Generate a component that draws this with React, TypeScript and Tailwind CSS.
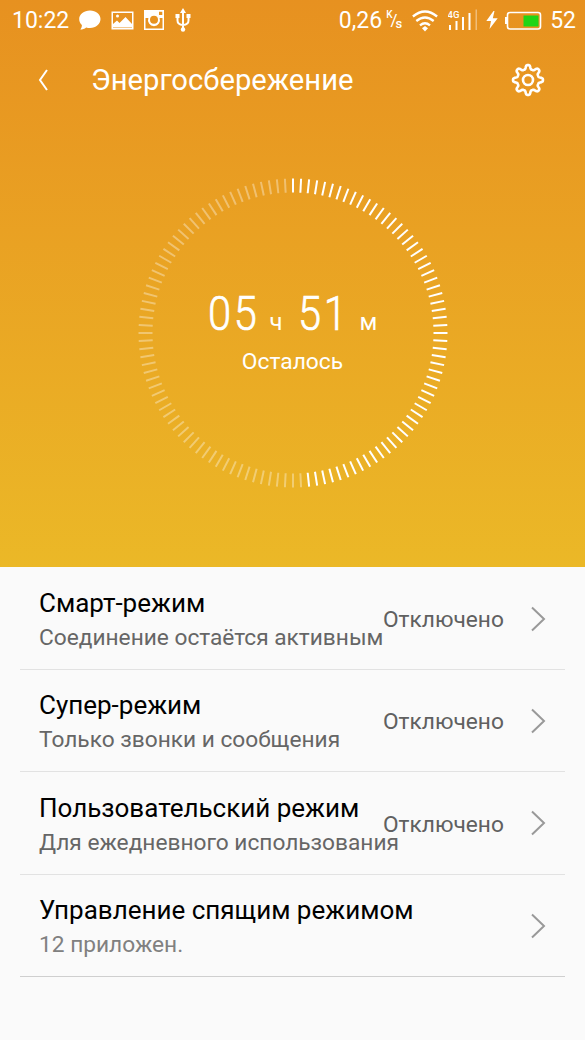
import type { ReactNode } from "react";

const modes = [
  { title: "Смарт-режим", hint: "Соединение остаётся активным", status: "Отключено", line: "border-[#e2e2e2]", hintColor: "text-[#666]" },
  { title: "Супер-режим", hint: "Только звонки и сообщения", status: "Отключено", line: "border-[#e2e2e2]", hintColor: "text-[#666]" },
  { title: "Пользовательский режим", hint: "Для ежедневного использования", status: "Отключено", line: "border-[#e2e2e2]", hintColor: "text-[#666]" },
  { title: "Управление спящим режимом", hint: "12 приложен.", status: "", line: "border-[#cfcfcf]", hintColor: "text-[#808080]" },
];

const TICKS = 120;
const ACTIVE_TICKS = 59;

// Eight rounded teeth, sampled in polar coordinates
const gearPath = (() => {
  const points: string[] = [];
  for (let i = 0; i < 160; i++) {
    const angle = (i / 160) * Math.PI * 2;
    const wave = Math.tanh(2 * Math.cos(angle * 8) - 0.3);
    const r = 13 + 2.1 * wave;
    points.push(`${(17 + r * Math.sin(angle)).toFixed(2)} ${(17 - r * Math.cos(angle)).toFixed(2)}`);
  }
  return `M${points.join("L")}Z`;
})();

const StatusBar = () => {
  return (
    <div className="flex h-10 items-center justify-between pl-3 pr-[9px] text-[23px] leading-none">
      <div className="flex items-center">
        <span className="w-[57px] whitespace-nowrap">10:22</span>
        <svg className="ml-[10px]" width="22" height="20" viewBox="0 0 22 20" fill="white">
          <path d="M11 0.5C17 0.5 21.5 4.2 21.5 9S17 18 11 18C9.6 18 8.3 17.8 7.2 17.4C5.5 18.8 3.5 19.6 1.3 19.6C2.4 18.3 2.9 16.8 2.9 15C1.1 13.4 0.2 11.3 0.2 9C0.2 4.2 5 0.5 11 0.5Z" />
        </svg>
        <svg className="ml-[10px]" width="23" height="20" viewBox="0 0 23 20">
          <rect x="1.25" y="2.25" width="20.5" height="16.5" fill="none" stroke="white" strokeWidth="1.5" />
          <path d="M2 17.5V14L6 10.5L8.5 13L14.5 7L21 14V17.5Z" fill="white" />
          <circle cx="6.5" cy="6" r="1.5" fill="white" />
        </svg>
        <svg className="ml-[10px]" width="20" height="20" viewBox="0 0 20 20">
          <path fill="white" fillRule="evenodd" d="M0 0H20V20H0ZM1.5 8V18.5H18.5V8H15.6A6 6 0 1 1 4.4 8ZM15 1.8V5H18.3V1.8ZM10 5.8A4 4 0 1 0 10 13.8A4 4 0 1 0 10 5.8Z" />
        </svg>
        <svg className="ml-[11px]" width="16" height="24" viewBox="0 0 16 24" fill="none" stroke="white" strokeWidth="2">
          <path d="M8 3V21M2.5 8V12.5Q2.5 16.5 8 17M13.5 8V12.5Q13.5 16.5 8 17" />
          <path d="M8 0L11 5H5ZM0.5 6H4.5V10H0.5ZM11.5 6H15.5V10H11.5Z" fill="white" stroke="none" />
          <circle cx="8" cy="21.5" r="2.2" fill="white" stroke="none" />
        </svg>
      </div>
      <div className="flex items-center">
        <span className="whitespace-nowrap">0,26</span>
        <span className="ml-1 flex w-4 items-center text-[10px] font-medium">
          <span className="-translate-y-[5px]">K</span>
          <span className="-ml-0.5 text-[17px] font-normal">/</span>
          <span className="-ml-0.5 translate-y-[3px] text-[13px]">s</span>
        </span>
        <svg className="ml-[10px] mt-px" width="26" height="22" viewBox="0 0 26 22" fill="none" stroke="white" strokeWidth="2.3">
          <path d="M0.9 6.5Q13 -3.5 25.1 6.5M4.3 11Q13 4 21.7 11M8 15.3Q13 11.2 18 15.3" />
          <path d="M13 16L16 18.3L13 21.5L10 18.3Z" fill="white" stroke="none" />
        </svg>
        <svg className="ml-[10px]" width="30" height="22" viewBox="0 0 30 22" fill="white">
          <text x="-0.5" y="8.5" fontSize="9.5" fontWeight="500" fontFamily="Roboto">4G</text>
          <path d="M1 16H3V21H1ZM7.5 12H9.5V21H7.5ZM14 8H16V21H14ZM20.5 4H22.5V21H20.5Z" />
          <path d="M27.5 0.5H29V21H27.5Z" opacity="0.4" />
        </svg>
        <svg className="ml-[8px]" width="12" height="18" viewBox="0 0 12 18" fill="white">
          <path d="M7.5 0L0.3 10H5L3.5 18L11.7 7.2H6.8L8.5 0Z" />
        </svg>
        <svg className="ml-[7px]" width="37" height="19" viewBox="0 0 37 19">
          <path d="M1 6V13" stroke="white" strokeWidth="2" />
          <rect x="2.5" y="1.5" width="33" height="16.5" rx="2.5" fill="none" stroke="white" strokeWidth="1.6" />
          <rect x="18.5" y="4.5" width="15" height="11" fill="#20d516" />
        </svg>
        <span className="ml-[8px] whitespace-nowrap">52</span>
      </div>
    </div>
  );
};

const Header = () => {
  return (
    <div className="flex h-20 items-center pl-[38px] pr-[40px]">
      <svg width="10" height="22" viewBox="0 0 10 22" fill="none" stroke="white" strokeWidth="2">
        <path d="M9 1L2 11L9 21" />
      </svg>
      <h1 className="ml-[43px] flex-1 whitespace-nowrap pt-0.5 text-[29.2px] leading-none">Энергосбережение</h1>
      <svg width="34" height="34" viewBox="0 0 34 34" fill="none" stroke="white" strokeWidth="2.6" strokeLinejoin="round">
        <path d={gearPath} />
        <circle cx="17" cy="17" r="5" />
      </svg>
    </div>
  );
};

const Digits = ({ children }: { children: ReactNode }) => (
  <span className="inline-block w-[54px] origin-left scale-x-[0.85] whitespace-nowrap text-[49px] font-light leading-none tracking-[3px] [-webkit-text-stroke:0.7px_white]">
    {children}
  </span>
);

const TimeRing = () => {
  return (
    <div className="mx-auto mt-[58px] grid h-[310px] w-[310px] place-items-center">
      <svg className="col-start-1 row-start-1" width="310" height="310" viewBox="-155 -155 310 310" stroke="white" strokeWidth="2">
        {Array.from({ length: TICKS }, (_, i) => (
          <line key={i} y1="-140.5" y2="-154.5" transform={`rotate(${i * 3})`} opacity={i < ACTIVE_TICKS ? 1 : 0.35} />
        ))}
      </svg>
      <div className="col-start-1 row-start-1 flex flex-col items-center pb-[2px]">
        <div className="flex w-[170px] items-baseline text-[24px]">
          <Digits>05</Digits>
          <span className="ml-[8px] w-[28px]">ч</span>
          <Digits>51</Digits>
          <span className="ml-[8px]">м</span>
        </div>
        <p className="mt-2 text-[22.8px] leading-7">Осталось</p>
      </div>
    </div>
  );
};

export default function App() {
  return (
    <main className="h-[1040px] w-[585px] overflow-hidden bg-[#fafafa] font-['Roboto',sans-serif]">
      <section className="h-[567px] bg-linear-to-b from-[#e79120] to-[#ebb827] text-white">
        <StatusBar />
        <Header />
        <TimeRing />
      </section>

      <ul className="px-5 pt-[0.4px]">
        {modes.map((mode) => (
          <li key={mode.title} className={`flex h-[102.4px] items-center border-b pl-[19px] pr-[19px] ${mode.line}`}>
            <div className="w-[344px] shrink-0 whitespace-nowrap pt-[5px]">
              <h2 className="text-[26px] leading-[34px] text-black">{mode.title}</h2>
              <p className={`text-[22.7px] leading-[35px] ${mode.hintColor}`}>{mode.hint}</p>
            </div>
            <span className="flex-1 whitespace-nowrap pt-[4px] text-[22.7px] text-[#606060]">{mode.status}</span>
            <svg className="mt-px" width="15" height="26" viewBox="0 0 15 26" fill="none" stroke="#999" strokeWidth="2">
              <path d="M1 1.5L13 13L1 24.5" />
            </svg>
          </li>
        ))}
      </ul>
    </main>
  );
}
